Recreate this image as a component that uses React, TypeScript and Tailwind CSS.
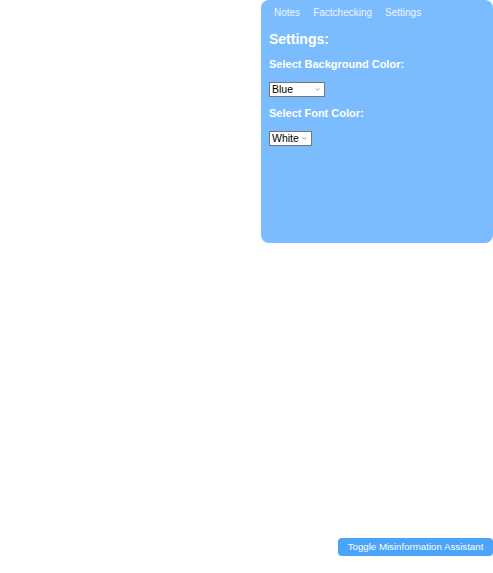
function Chevron() {
  return (
    <svg
      viewBox="0 0 6 4"
      className="pointer-events-none absolute right-[5px] top-[6px] h-[3px] w-[5px]"
      fill="none"
      stroke="#7a7a7a"
      strokeWidth="1"
    >
      <path d="M0.5 0.5 L3 3 L5.5 0.5" />
    </svg>
  )
}

function Picker({ width, value, options }: { width: string; value: string; options: string[] }) {
  return (
    <div className={`relative mt-[11px] ${width}`}>
      <select
        defaultValue={value}
        className="block h-[15px] w-full appearance-none border border-[#767676] bg-white pl-[2px] text-[10.5px] leading-[13px] text-black outline-none"
      >
        {options.map((o) => (
          <option key={o} value={o}>
            {o}
          </option>
        ))}
      </select>
      <Chevron />
    </div>
  )
}

export default function App() {
  return (
    <div className="flex h-screen flex-col items-end justify-between font-['Liberation_Sans',Arial,sans-serif] text-white">
      <div className="h-[243px] w-[232px] rounded-lg bg-[#7bbcfe] px-2 pt-[6px]">
        <div className="flex gap-[13px] px-[5px] text-[10px] leading-[14px] text-[#eef6ff]">
          <button type="button">Notes</button>
          <button type="button">Factchecking</button>
          <button type="button">Settings</button>
        </div>
        <h3 className="mt-[11px] text-[14px] font-bold leading-[17px]">Settings:</h3>
        <p className="mt-[9px] text-[11px] font-bold leading-[14px]">Select Background Color:</p>
        <Picker width="w-[56px]" value="Blue" options={['Blue', 'Green', 'Purple']} />
        <p className="mt-[9px] text-[11px] font-bold leading-[14px]">Select Font Color:</p>
        <Picker width="w-[43px]" value="White" options={['White', 'Black']} />
      </div>
      <button
        type="button"
        className="mb-[17px] h-[18px] w-[155px] rounded-[4px] bg-[#4ba3fb] text-[9.7px] leading-[18px] text-white"
      >
        Toggle Misinformation Assistant
      </button>
    </div>
  )
}
